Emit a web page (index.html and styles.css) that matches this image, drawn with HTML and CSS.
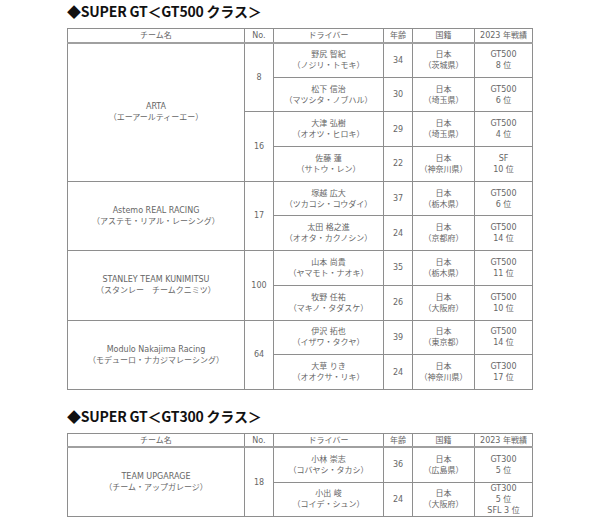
FILE: index.html
```html
<!DOCTYPE html>
<html lang="ja">
<head>
<meta charset="utf-8">
<link rel="stylesheet" href="styles.css">
</head>
<body>
<div class="page">
  <h2 class="title first">◆SUPER GT＜GT500 クラス＞</h2>
  <table class="grid">
    <colgroup>
      <col class="c-team"><col class="c-no"><col class="c-drv"><col class="c-age"><col class="c-nat"><col class="c-res">
    </colgroup>
    <thead>
      <tr class="head"><th>チーム名</th><th>No.</th><th>ドライバー</th><th>年齢</th><th>国籍</th><th>2023 年戦績</th></tr>
    </thead>
    <tbody>
      <tr class="row">
        <td rowspan="4" class="team">ARTA<br>（エーアールティーエー）</td>
        <td rowspan="2">8</td>
        <td>野尻 智紀<br>（ノジリ・トモキ）</td><td>34</td><td>日本<br>（茨城県）</td><td>GT500<br>8 位</td>
      </tr>
      <tr class="row">
        <td>松下 信治<br>（マツシタ・ノブハル）</td><td>30</td><td>日本<br>（埼玉県）</td><td>GT500<br>6 位</td>
      </tr>
      <tr class="row">
        <td rowspan="2">16</td>
        <td>大津 弘樹<br>（オオツ・ヒロキ）</td><td>29</td><td>日本<br>（埼玉県）</td><td>GT500<br>4 位</td>
      </tr>
      <tr class="row">
        <td>佐藤 蓮<br>（サトウ・レン）</td><td>22</td><td>日本<br>（神奈川県）</td><td>SF<br>10 位</td>
      </tr>
      <tr class="row">
        <td rowspan="2" class="team">Astemo REAL RACING<br>（アステモ・リアル・レーシング）</td>
        <td rowspan="2">17</td>
        <td>塚越 広大<br>（ツカコシ・コウダイ）</td><td>37</td><td>日本<br>（栃木県）</td><td>GT500<br>6 位</td>
      </tr>
      <tr class="row">
        <td>太田 格之進<br>（オオタ・カクノシン）</td><td>24</td><td>日本<br>（京都府）</td><td>GT500<br>14 位</td>
      </tr>
      <tr class="row">
        <td rowspan="2" class="team">STANLEY TEAM KUNIMITSU<br>（スタンレー　チームクニミツ）</td>
        <td rowspan="2">100</td>
        <td>山本 尚貴<br>（ヤマモト・ナオキ）</td><td>35</td><td>日本<br>（栃木県）</td><td>GT500<br>11 位</td>
      </tr>
      <tr class="row">
        <td>牧野 任祐<br>（マキノ・タダスケ）</td><td>26</td><td>日本<br>（大阪府）</td><td>GT500<br>10 位</td>
      </tr>
      <tr class="row">
        <td rowspan="2" class="team">Modulo Nakajima Racing<br>（モデューロ・ナカジマレーシング）</td>
        <td rowspan="2">64</td>
        <td>伊沢 拓也<br>（イザワ・タクヤ）</td><td>39</td><td>日本<br>（東京都）</td><td>GT500<br>14 位</td>
      </tr>
      <tr class="row">
        <td>大草 りき<br>（オオクサ・リキ）</td><td>24</td><td>日本<br>（神奈川県）</td><td>GT300<br>17 位</td>
      </tr>
    </tbody>
  </table>

  <h2 class="title second">◆SUPER GT＜GT300 クラス＞</h2>
  <table class="grid">
    <colgroup>
      <col class="c-team"><col class="c-no"><col class="c-drv"><col class="c-age"><col class="c-nat"><col class="c-res">
    </colgroup>
    <thead>
      <tr class="head"><th>チーム名</th><th>No.</th><th>ドライバー</th><th>年齢</th><th>国籍</th><th>2023 年戦績</th></tr>
    </thead>
    <tbody>
      <tr class="row">
        <td rowspan="2" class="team">TEAM UPGARAGE<br>（チーム・アップガレージ）</td>
        <td rowspan="2">18</td>
        <td>小林 崇志<br>（コバヤシ・タカシ）</td><td>36</td><td>日本<br>（広島県）</td><td>GT300<br>5 位</td>
      </tr>
      <tr class="row">
        <td>小出 峻<br>（コイデ・シュン）</td><td>24</td><td>日本<br>（大阪府）</td><td>GT300<br>5 位<br>SFL 3 位</td>
      </tr>
    </tbody>
  </table>
</div>
</body>
</html>
```

FILE: styles.css
```css
html, body {
  margin: 0;
  padding: 0;
  background: #ffffff;
}

body {
  font-family: "DejaVu Sans", "Noto Sans CJK JP", sans-serif;
  color: #666666;
}

.page {
  padding-left: 67px;
  width: 465px;
}

.title {
  margin: 0;
  font-family: "Noto Sans CJK JP", sans-serif;
  font-weight: 700;
  font-size: 14px;
  line-height: 20px;
  height: 20px;
  color: #111111;
  letter-spacing: -0.2px;
}

.title.first {
  padding-top: 1px;
  margin-bottom: 7px;
}

.title.second {
  margin-top: 16px;
  margin-bottom: 7px;
}

.grid {
  border-collapse: collapse;
  table-layout: fixed;
  width: 465px;
  font-size: 8px;
  line-height: 11px;
}

.c-team { width: 177px; }
.c-no { width: 29px; }
.c-drv { width: 110px; }
.c-age { width: 29px; }
.c-nat { width: 62px; }
.c-res { width: 58px; }

.grid th,
.grid td {
  border: 1px solid #8e8e8e;
  padding: 0;
  text-align: center;
  vertical-align: middle;
  font-weight: normal;
  white-space: nowrap;
}

.grid thead th {
  border-bottom: 2px solid #a0a0a0;
}

.head {
  height: 14px;
}

.row {
  height: 34.7px;
}
```
